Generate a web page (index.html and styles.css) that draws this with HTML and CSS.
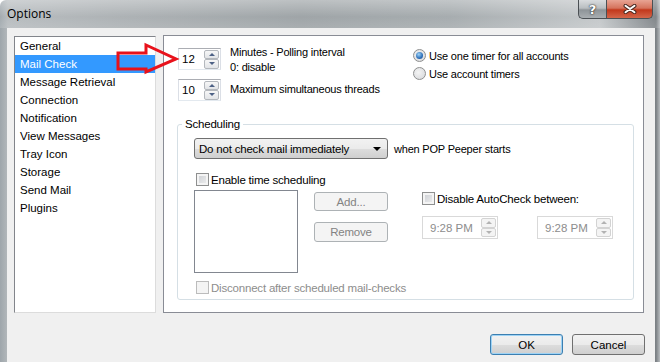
FILE: index.html
```html
<!DOCTYPE html>
<html lang="en">
<head>
    <meta charset="UTF-8">
    <title>Options</title>
    <link rel="stylesheet" href="styles.css">
</head>
<body>
    <div class="window">
        <!-- Title bar -->
        <div class="titlebar">
            <span class="title">Options</span>
            <div class="caption-buttons">
                <span class="cap-help">?</span>
                <span class="cap-close">
                    <svg width="14" height="10" viewBox="0 0 14 10">
                        <path d="M2.5 1.8 L11.5 8.2 M11.5 1.8 L2.5 8.2" stroke="#4a2a22" stroke-width="4" stroke-linecap="round"/>
                        <path d="M2.5 1.8 L11.5 8.2 M11.5 1.8 L2.5 8.2" stroke="#fff" stroke-width="2" stroke-linecap="round"/>
                    </svg>
                </span>
            </div>
        </div>

        <div class="client">
            <div class="main">
                <!-- Category list -->
                <ul class="nav">
                    <li>General</li>
                    <li class="active">Mail Check</li>
                    <li>Message Retrieval</li>
                    <li>Connection</li>
                    <li>Notification</li>
                    <li>View Messages</li>
                    <li>Tray Icon</li>
                    <li>Storage</li>
                    <li>Send Mail</li>
                    <li>Plugins</li>
                </ul>

                <!-- Mail Check page -->
                <div class="panel">
                    <div class="top">
                        <div class="spins">
                            <div class="spin-row">
                                <div class="spin">
                                    <span class="val">12</span>
                                    <span class="spin-btns"><i class="up"></i><i class="down"></i></span>
                                </div>
                                <div class="spin-label first">Minutes - Polling interval<br>0: disable</div>
                            </div>
                            <div class="spin-row">
                                <div class="spin">
                                    <span class="val">10</span>
                                    <span class="spin-btns"><i class="up"></i><i class="down"></i></span>
                                </div>
                                <div class="spin-label">Maximum simultaneous threads</div>
                            </div>
                        </div>
                        <div class="radios">
                            <div class="radio-row"><span class="radio checked"></span>Use one timer for all accounts</div>
                            <div class="radio-row"><span class="radio"></span>Use account timers</div>
                        </div>
                    </div>

                    <fieldset class="sched">
                        <legend>Scheduling</legend>
                        <div class="startup">
                            <div class="combo">Do not check mail immediately<span class="combo-arrow"></span></div>
                            <span>when POP Peeper starts</span>
                        </div>
                        <div class="check"><span class="box"></span>Enable time scheduling</div>
                        <div class="sched-body">
                            <div class="sched-list"></div>
                            <div class="sched-buttons">
                                <span class="pbtn">Add...</span>
                                <span class="pbtn">Remove</span>
                            </div>
                            <div class="autocheck">
                                <div class="check"><span class="box"></span>Disable AutoCheck between:</div>
                                <div class="times">
                                    <div class="spin time">
                                        <span class="val">9:28 PM</span>
                                        <span class="spin-btns"><i class="up"></i><i class="down"></i></span>
                                    </div>
                                    <div class="spin time">
                                        <span class="val">9:28 PM</span>
                                        <span class="spin-btns"><i class="up"></i><i class="down"></i></span>
                                    </div>
                                </div>
                            </div>
                        </div>
                        <div class="check disabled"><span class="box"></span>Disconnect after scheduled mail-checks</div>
                    </fieldset>
                </div>
            </div>

            <div class="footer">
                <span class="btn default">OK</span>
                <span class="btn">Cancel</span>
            </div>
        </div>

        <!-- Red callout arrow drawn over the dialog -->
        <svg class="callout" width="660" height="362" viewBox="0 0 660 362">
            <polygon points="118,53 146,53 146,45 176,59 146,72 146,69 118,69" fill="none" stroke="#e8121b" stroke-width="3" stroke-linejoin="miter"/>
        </svg>
    </div>
</body>
</html>
```

FILE: styles.css
```css
/* Options dialog */
body {
    margin: 0;
    width: 660px;
    height: 362px;
    overflow: hidden;
    font-family: "Liberation Sans", Arial, sans-serif;
    font-size: 11px;
    color: #000;
}
.window {
    position: relative;
    width: 660px;
    height: 362px;
    display: flex;
    flex-direction: column;
    background: linear-gradient(90deg, #9ea6ab 0px, #b4b9bc 8px, #a9aeb1 120px, #9aa0a3 300px, #a2a8ab 450px, #c2c6c8 600px, #7b8084 656px, #b8bcbf 660px);
    border-top-left-radius: 6px;
}

/* Title bar */
.titlebar {
    height: 28px;
    display: flex;
    justify-content: space-between;
    align-items: flex-start;
    background: linear-gradient(180deg, rgba(255,255,255,0.35), rgba(255,255,255,0.05) 60%, rgba(255,255,255,0.15));
}
.title {
    font-family: "Open Sans", "Noto Sans", sans-serif;
    font-size: 12px;
    margin: 5px 0 0 7px;
    color: #000;
}
.caption-buttons {
    display: flex;
    margin-right: 7px;
}
.cap-help,
.cap-close {
    height: 19px;
    display: flex;
    align-items: center;
    justify-content: center;
    box-sizing: border-box;
    border: 1px solid #4b5054;
    border-top: none;
}
.cap-help {
    width: 28px;
    border-right: none;
    border-bottom-left-radius: 5px;
    background: linear-gradient(180deg, #d9dcde 0%, #b9bec1 45%, #8e9498 55%, #a9aeb1 100%);
    color: #fff;
    font-family: "DejaVu Sans", sans-serif;
    font-weight: bold;
    font-size: 13px;
    text-shadow: 0 0 2px #222, 0 0 1px #222;
}
.cap-close {
    width: 47px;
    border-bottom-right-radius: 5px;
    background: linear-gradient(180deg, #e8a494 0%, #d5735d 45%, #c2381c 55%, #d4664a 100%);
}

/* Client area */
.client {
    flex: 1;
    margin: 0 5px 0 7px;
    background-color: #f0f0f0;
    display: flex;
    flex-direction: column;
}
.main {
    display: flex;
    gap: 7px;
    padding: 7px 11px 0 7px;
}
.nav {
    list-style: none;
    margin: 1px 0 0 0;
    padding: 0;
    width: 142px;
    height: 277px;
    box-sizing: border-box;
    background-color: #fff;
    border: 1px solid;
    border-color: #82858b #dcdcdc #dcdcdc #82858b;
    font-size: 11.5px;
}
.nav li {
    height: 18px;
    line-height: 18px;
    padding-left: 5px;
}
.nav li.active {
    background-color: #3399ff;
    color: #fff;
}
.panel {
    flex: 1;
    height: 278px;
    box-sizing: border-box;
    background-color: #fff;
    border: 1px solid #898c95;
    letter-spacing: -0.2px;
}

/* Top: spinners and radios */
.top {
    display: flex;
    padding: 12px 0 0 14px;
}
.spins {
    width: 235px;
    display: flex;
    flex-direction: column;
    gap: 9px;
}
.spin-row {
    display: flex;
    align-items: center;
    gap: 9px;
    height: 22px;
}
.spin-label {
    margin-top: -3px;
}
.spin-label.first {
    line-height: 15px;
    align-self: flex-start;
}
.spin {
    width: 43px;
    height: 22px;
    box-sizing: border-box;
    display: flex;
    align-items: center;
    justify-content: space-between;
    padding: 0 1px 0 3px;
    background-color: #fff;
    border: 1px solid;
    border-color: #abadb3 #dbdfe6 #e3e9ef #dbdfe6;
    font-size: 11.5px;
    letter-spacing: 0;
}
.spin-btns {
    display: flex;
    flex-direction: column;
    width: 15px;
    height: 19px;
}
.spin-btns i {
    flex: 1;
    box-sizing: border-box;
    border: 1px solid #b4b8bd;
    border-radius: 2px;
    background: linear-gradient(180deg, #f7f7f7, #e2e4e7);
    display: flex;
    align-items: center;
    justify-content: center;
}
.spin-btns i::after {
    content: "";
    border-left: 3px solid transparent;
    border-right: 3px solid transparent;
}
.spin-btns .up::after {
    border-bottom: 3px solid #4d6185;
}
.spin-btns .down::after {
    border-top: 3px solid #4d6185;
}
.radios {
    display: flex;
    flex-direction: column;
    gap: 5px;
    padding-top: 1px;
}
.radio-row {
    display: flex;
    align-items: center;
    gap: 3px;
    height: 13px;
}
.radio {
    width: 13px;
    height: 13px;
    box-sizing: border-box;
    border-radius: 50%;
    border: 1px solid #8e8f8f;
    background: radial-gradient(circle at 40% 40%, #f4f4f4, #d4d6d9);
    display: flex;
    align-items: center;
    justify-content: center;
}
.radio.checked::after {
    content: "";
    width: 7px;
    height: 7px;
    border-radius: 50%;
    background: radial-gradient(circle at 40% 35%, #9fd4f7, #2d6fb9 60%, #1c4c8f);
}

/* Scheduling group */
.sched {
    margin: 16px 9px 0 13px;
    padding: 7px 0 5px 16px;
    border: 1px solid #d5dfe5;
    border-radius: 3px;
    min-width: 0;
}
.sched legend {
    padding: 0 3px;
    margin-left: -12px;
    font-size: 11.5px;
    line-height: 14px;
}
.startup {
    display: flex;
    align-items: center;
    gap: 6px;
}
.combo {
    width: 194px;
    height: 21px;
    box-sizing: border-box;
    display: flex;
    align-items: center;
    justify-content: space-between;
    padding: 0 6px 0 4px;
    border: 1px solid #707070;
    border-radius: 3px;
    background: linear-gradient(180deg, #f2f2f2 0%, #ebebeb 50%, #dddddd 51%, #cfcfcf 100%);
    font-size: 11.5px;
}
.combo-arrow {
    border-left: 4px solid transparent;
    border-right: 4px solid transparent;
    border-top: 4px solid #000;
}
.check {
    display: flex;
    align-items: center;
    gap: 2px;
    margin: 14px 0 0 2px;
    height: 13px;
    font-size: 11.5px;
}
.box {
    width: 13px;
    height: 13px;
    box-sizing: border-box;
    border: 1px solid #8e8f8f;
    background: linear-gradient(135deg, #c9ccd1, #f1f1f1);
    box-shadow: inset 0 0 0 2px #f4f4f4;
}
.check.disabled {
    color: #8d8d8d;
    margin-top: 8px;
}
.check.disabled .box {
    border-color: #bcbcbc;
    background: #f4f4f4;
}
.sched-body {
    display: flex;
    margin-top: 4px;
}
.sched-list {
    width: 104px;
    height: 83px;
    box-sizing: border-box;
    border: 1px solid #828790;
    background-color: #fff;
}
.sched-buttons {
    display: flex;
    flex-direction: column;
    gap: 11px;
    margin: 2px 0 0 16px;
}
.pbtn {
    width: 74px;
    height: 19px;
    box-sizing: border-box;
    display: flex;
    align-items: center;
    justify-content: center;
    border: 1px solid #adb2b5;
    border-radius: 3px;
    background-color: #f4f4f4;
    color: #838383;
    font-size: 11.5px;
}
.pbtn + .pbtn {
    height: 20px;
}
.autocheck {
    margin: 2px 0 0 34px;
}
.autocheck .check {
    margin: 0;
}
.times {
    display: flex;
    gap: 39px;
    margin-top: 11px;
}
.spin.time {
    width: 76px;
    height: 23px;
    padding-left: 7px;
    border-color: #d9d9d9;
    color: #8d8d8d;
}
.spin.time .spin-btns i {
    border-color: #d3d3d3;
    background: #f4f4f4;
}
.spin.time .spin-btns .up::after {
    border-bottom-color: #b2b2b2;
}
.spin.time .spin-btns .down::after {
    border-top-color: #b2b2b2;
}

/* Footer buttons */
.footer {
    display: flex;
    justify-content: flex-end;
    gap: 9px;
    padding: 21px 10px 0 0;
}
.btn {
    width: 73px;
    height: 21px;
    box-sizing: border-box;
    display: flex;
    align-items: center;
    justify-content: center;
    border: 1px solid #707070;
    border-radius: 3px;
    background: linear-gradient(180deg, #f2f2f2 0%, #ebebeb 50%, #dddddd 51%, #cfcfcf 100%);
    font-size: 11.5px;
}
.btn.default {
    border-color: #3c7fb1;
    box-shadow: inset 0 0 0 1px #9ed3f5;
}

/* Callout arrow overlay */
.callout {
    position: absolute;
    left: 0;
    top: 0;
    pointer-events: none;
}
```
